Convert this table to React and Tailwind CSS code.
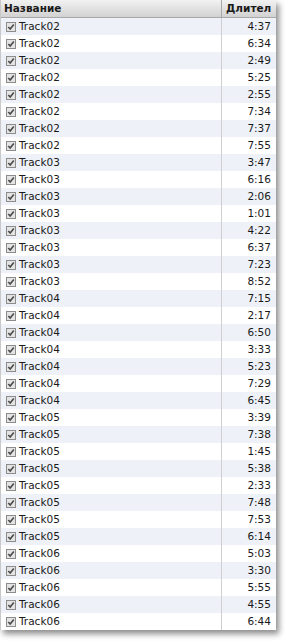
import React from 'react';

const tracks = [
    ['Track02', '4:37'], ['Track02', '6:34'], ['Track02', '2:49'], ['Track02', '5:25'],
    ['Track02', '2:55'], ['Track02', '7:34'], ['Track02', '7:37'], ['Track02', '7:55'],
    ['Track03', '3:47'], ['Track03', '6:16'], ['Track03', '2:06'], ['Track03', '1:01'],
    ['Track03', '4:22'], ['Track03', '6:37'], ['Track03', '7:23'], ['Track03', '8:52'],
    ['Track04', '7:15'], ['Track04', '2:17'], ['Track04', '6:50'], ['Track04', '3:33'],
    ['Track04', '5:23'], ['Track04', '7:29'], ['Track04', '6:45'],
    ['Track05', '3:39'], ['Track05', '7:38'], ['Track05', '1:45'], ['Track05', '5:38'],
    ['Track05', '2:33'], ['Track05', '7:48'], ['Track05', '7:53'], ['Track05', '6:14'],
    ['Track06', '5:03'], ['Track06', '3:30'], ['Track06', '5:55'], ['Track06', '4:55'],
    ['Track06', '6:44'],
];

const Check = () => (
    <svg width="10" height="10" viewBox="0 0 10 10" className="shrink-0">
        <rect x="0.5" y="0.5" width="9" height="9" fill="#e4e4e4" stroke="#8c8c8c" />
        <path d="M2.3 5 L4.2 7 L7.8 2.6" fill="none" stroke="#4a4a4a" strokeWidth="1.6" />
    </svg>
);

export default function App() {
    return (
        <div className="w-[285px] h-[642px] bg-white" style={{ fontFamily: '"DejaVu Sans", sans-serif' }}>
            <div className="w-[276px] bg-white border-l border-[#c8c8c8] shadow-[3px_4px_6px_rgba(0,0,0,0.45)]">
                <div className="flex h-[18px] bg-gradient-to-b from-[#f2f2f2] to-[#d2d2d2] border-b border-[#a8a8a8] text-[10.5px] font-bold text-[#1a1a1a]">
                    <div className="w-[221px] flex items-center pl-[3px] border-r border-[#a8a8a8]">Название</div>
                    <div className="flex-1 flex items-center pl-[4px] overflow-hidden whitespace-nowrap">Длител</div>
                </div>
                {tracks.map(([name, time], i) => (
                    <div key={i} className={`flex h-[17px] text-[10.5px] text-[#1a1a1a] ${i % 2 === 0 ? 'bg-[#eef2f8]' : 'bg-white'}`}>
                        <div className="w-[221px] flex items-center gap-[3px] pl-[5px] border-r border-[#cfcfcf]">
                            <Check />
                            <span>{name}</span>
                        </div>
                        <div className="flex-1 flex items-center justify-end pr-[5px]">{time}</div>
                    </div>
                ))}
            </div>
        </div>
    );
}
